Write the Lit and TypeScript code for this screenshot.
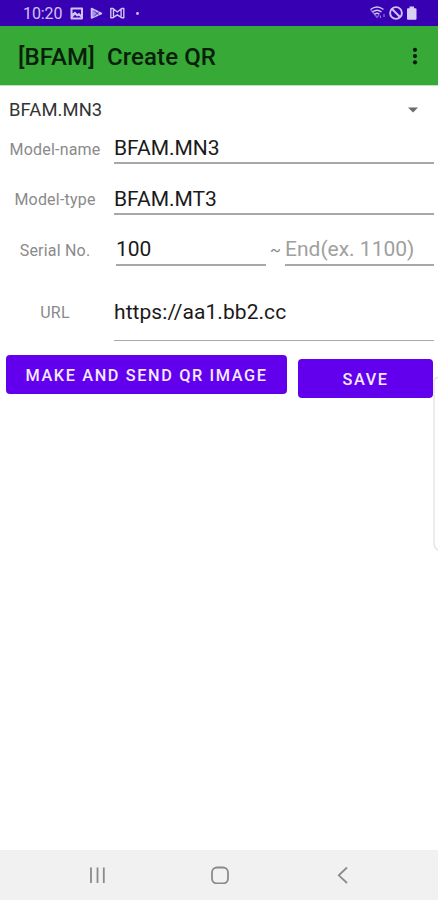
import { LitElement, html, css } from "lit";
import { customElement } from "lit/decorators.js";

@customElement("status-bar")
class StatusBar extends LitElement {
  static styles = css`
    :host { display: flex; height: 26px; align-items: center; justify-content: space-between; background: #3700b3; color: #cfc4f2; padding: 0 19px 0 23px; box-sizing: border-box; }
    .time { font-size: 16px; letter-spacing: -0.1px; padding-top: 2px; height: 26px; box-sizing: border-box; line-height: 24px; width: 47px; }
    .side { display: flex; align-items: center; height: 26px; }
    svg { display: block; }
  `;
  render() {
    return html`
      <div class="side">
        <span class="time">10:20</span>
        <svg width="72" height="26" viewBox="0 0 72 26">
          <path fill="#cfc4f2" fill-rule="evenodd" d="M1.500 7.500H12a1 1 0 0 1 1 1V18.500a1 1 0 0 1-1 1H1.500a1 1 0 0 1-1-1V8.500a1 1 0 0 1 1-1ZM2.500 9.500v4l2.500-2 2.500 2.500 1.500-1.200 2 2V9.500ZM2.500 17.500h8.500l-2-1.700-2 .8-2-1.800Z"/>
          <path fill="#a592e3" stroke="#cfc4f2" stroke-width="1.500" stroke-linejoin="round" d="M21.500 8.500v9.500L31.500 13.500Z"/>
          <path stroke="#3700b3" stroke-width=".8" fill="none" d="M24 10.500 29 15.500M24 16.500 29 11.500"/>
          <path fill="none" stroke="#cfc4f2" stroke-width="1.400" stroke-linejoin="round" d="M40.800 8.500h2.200l4.300 3.500 4.300-3.500h2.200V17.700h-2.200L47.300 14.800 43 17.700h-2.200ZM43.500 9.500V16.500M51.100 9.500V16.500"/>
          <circle cx="67.500" cy="13.500" r="1.400" fill="#cfc4f2"/>
        </svg>
      </div>
      <svg width="50" height="26" viewBox="369 0 50 26">
        <g fill="none" stroke="#cfc4f2" stroke-width="1.400">
          <path d="M370.500 9.500Q377 4.500 383.500 9.500M372.500 12Q377 8.500 381.500 12M374.500 14.300Q377 12.300 379.500 14.300"/>
          <path d="M370.800 9.800 377 17.300 379 15" opacity=".5"/>
          <path stroke-width="1.200" d="M380.500 15.500v2.500M384 14v3" opacity=".6"/>
          <circle cx="396" cy="13" r="5.900" stroke-width="1.900"/>
          <path stroke-width="1.900" d="m392 9 8 8"/>
        </g>
        <path fill="#d8cff5" d="M409.500 6.500h4.500v1.700h1.500a1 1 0 0 1 1 1V18.700a1 1 0 0 1-1 1h-7.500a1 1 0 0 1-1-1V9.200a1 1 0 0 1 1-1h1.500Z"/>
      </svg>`;
  }
}

@customElement("title-bar")
class TitleBar extends LitElement {
  static styles = css`
    :host { display: flex; height: 59px; box-sizing: border-box; align-items: center; justify-content: space-between; background: #37a937; color: #08200a; padding: 2px 20px 0 18px; box-shadow: 0 1px 0 #bfe3bf; }
    .title { font-size: 24px; line-height: 28px; font-weight: 500; white-space: pre; letter-spacing: 0.1px; }
    svg { display: block; }
  `;
  render() {
    return html`<span class="title">[BFAM]  Create QR</span>
      <svg width="6" height="20" viewBox="0 0 6 20" fill="#0a1a0a">
        <circle cx="3" cy="2.800" r="2.100"/><circle cx="3" cy="9.100" r="2.100"/><circle cx="3" cy="15.300" r="2.100"/>
      </svg>`;
  }
}

@customElement("qr-form")
class QrForm extends LitElement {
  static styles = css`
    :host { display: block; padding: 1px 4px 0 0; }
    .spinner { display: flex; height: 47px; align-items: center; justify-content: space-between; padding: 0 16px 0 9px; font-size: 18.400px; color: #333; letter-spacing: 0.1px; box-sizing: border-box; }
    .row { display: grid; grid-template-columns: 110px 1fr; column-gap: 4px; box-sizing: border-box; }
    .name { height: 31px; }
    .type, .serial { height: 51px; }
    .url { height: 75px; }
    .label { text-align: center; font-size: 16px; color: #8a8a8a; align-self: end; line-height: 20px; padding-bottom: 4px; letter-spacing: 0.2px; }
    .type .label, .serial .label { padding-bottom: 5px; }
    .field { border-bottom: 2px solid #a8a8a8; font-size: 21px; color: #1a1a1a; line-height: 24px; padding-bottom: 2px; align-self: end; white-space: nowrap; }
    .serial .field { padding-bottom: 3px; }
    .url .label { padding-bottom: 18px; }
    .url .field { padding-bottom: 16px; border-bottom-width: 1px; letter-spacing: 0.06px; }
    .pair { display: grid; grid-template-columns: 150px 19px 1fr; align-self: end; padding-left: 2px; }
    .tilde { font-size: 16px; color: #8a8a8a; text-align: center; line-height: 28px; }
    .hint { color: #a0a0a0; }
    .buttons { display: grid; grid-template-columns: 281px 135px; column-gap: 11px; padding: 14px 0 0 6px; }
    .button { height: 39px; border-radius: 4px; background: #6200ee; color: #f3ebff; font-size: 16.300px; font-weight: 500; letter-spacing: 1.620px; line-height: 41px; text-align: center; white-space: nowrap; }
    .save { margin-top: 4px; }
  `;
  render() {
    return html`
      <div class="spinner"><span>BFAM.MN3</span>
        <svg width="10" height="6" viewBox="0 0 10 6"><path d="M0 .5h10L5 5.500Z" fill="#6c6c6c"/></svg>
      </div>
      <div class="row name"><span class="label">Model-name</span><span class="field">BFAM.MN3</span></div>
      <div class="row type"><span class="label">Model-type</span><span class="field">BFAM.MT3</span></div>
      <div class="row serial"><span class="label">Serial No.</span>
        <div class="pair"><span class="field">100</span><span class="tilde">~</span><span class="field hint">End(ex. 1100)</span></div>
      </div>
      <div class="row url"><span class="label">URL</span><span class="field">https://aa1.bb2.cc</span></div>
      <div class="buttons"><div class="button">MAKE AND SEND QR IMAGE</div><div class="button save">SAVE</div></div>`;
  }
}

@customElement("nav-bar")
class NavBar extends LitElement {
  static styles = css`
    :host { display: grid; grid-template-columns: 18px 18px 18px; justify-content: start; column-gap: 105px; padding-left: 88px; height: 50px; align-items: center; background: #f1f1f1; }
    svg { display: block; fill: none; stroke: #8a8a8a; stroke-width: 1.800; }
  `;
  render() {
    return html`
      <svg width="18" height="18"><path d="M3 1.500v15.500M9.500 1.500v15.500M15.800 1.500v15.500"/></svg>
      <svg width="18" height="18"><rect x="1" y="1.500" width="16" height="16" rx="5"/></svg>
      <svg width="18" height="18"><path d="M13 1.500 4.800 9.300 13 17"/></svg>`;
  }
}

@customElement("app-root")
class AppRoot extends LitElement {
  static styles = css`
    :host { display: flex; flex-direction: column; position: relative; width: 438px; height: 900px; overflow: hidden; background: #fff; font-family: Roboto, sans-serif; }
    .content { flex: 1; }
    .handle { position: absolute; right: 0; top: 376px; display: block; }
  `;
  render() {
    return html`
      <status-bar></status-bar>
      <title-bar></title-bar>
      <qr-form class="content"></qr-form>
      <nav-bar></nav-bar>
      <svg class="handle" width="5" height="176" viewBox="0 0 5 176"><path d="M5 1.500Q1 1.500 1 6V168Q1.500 172 5 174.500" fill="none" stroke="#e2e2e2" stroke-width="1.300"/></svg>`;
  }
}
